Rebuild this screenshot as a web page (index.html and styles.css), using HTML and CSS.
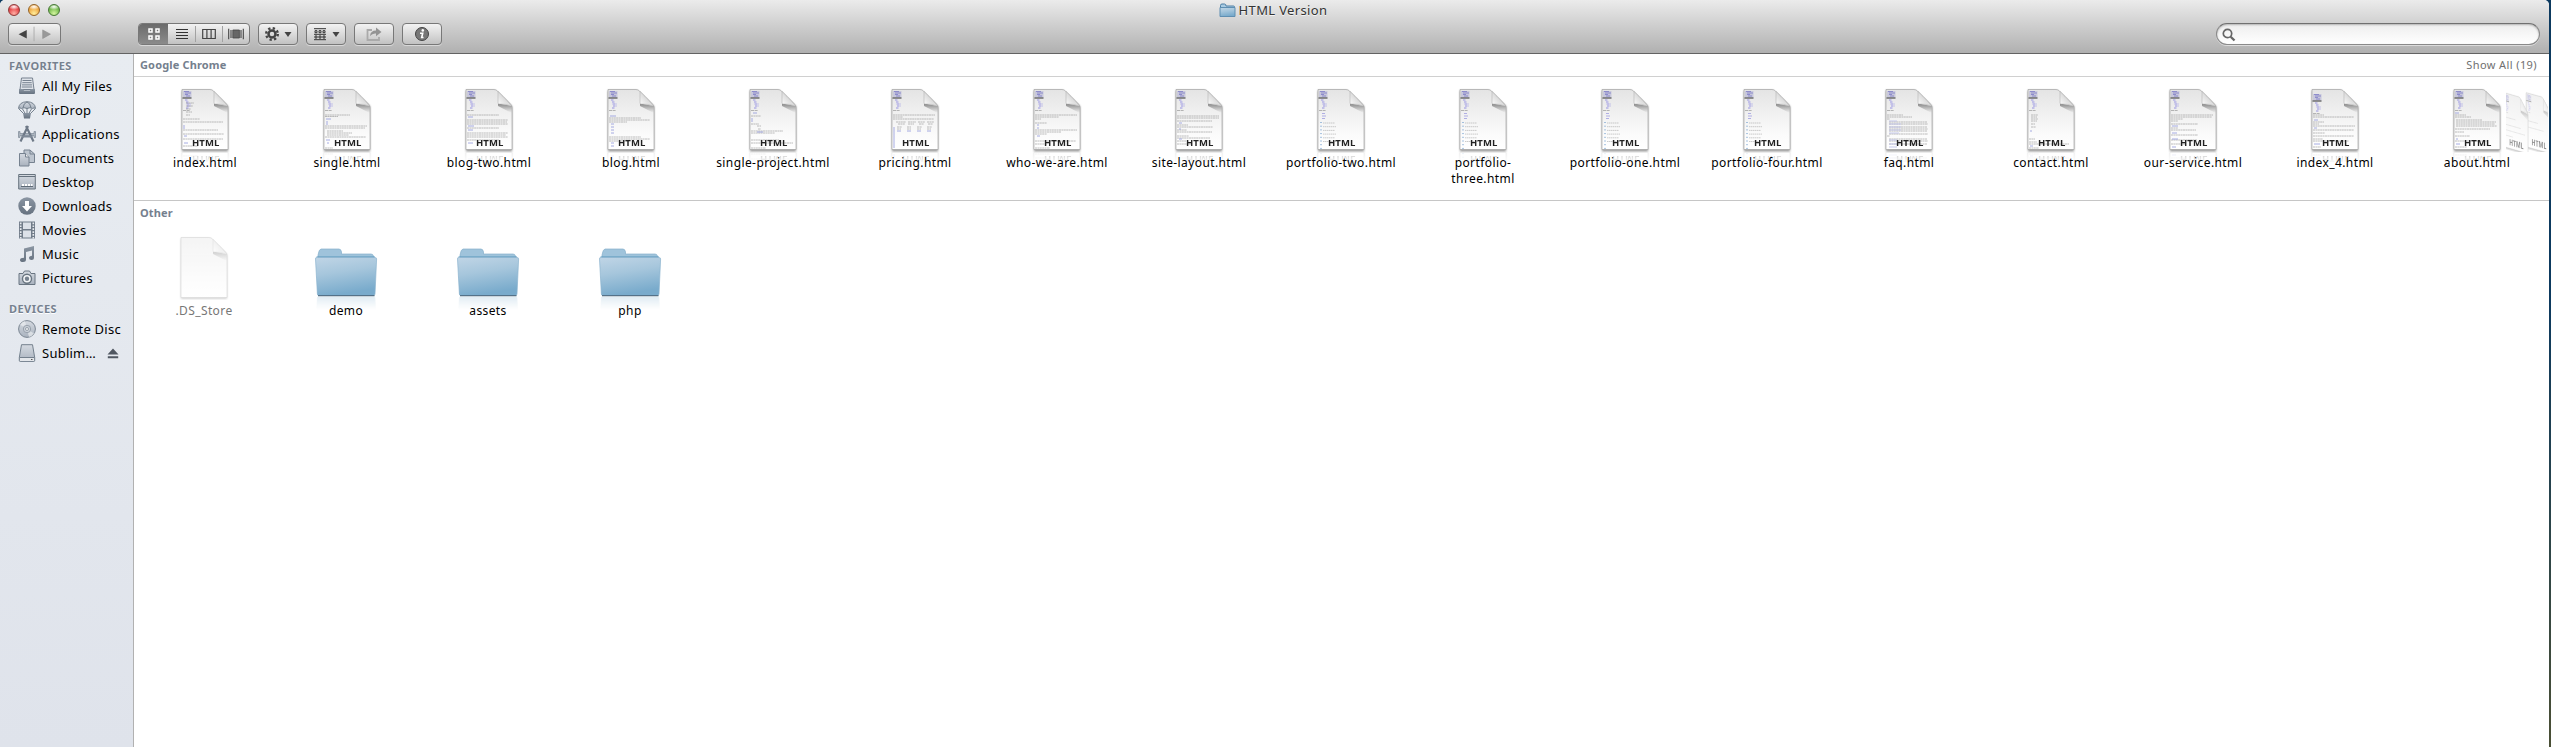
FILE: index.html
```html
<!DOCTYPE html>
<html lang="en">
<head>
<meta charset="utf-8">
<title>HTML Version</title>
<link rel="stylesheet" href="styles.css">
</head>
<body>
<svg class="defs" width="0" height="0" aria-hidden="true">
  <defs>
    <linearGradient id="paper" x1="0" y1="0" x2="0" y2="1"><stop offset="0" stop-color="#e4e4e4"/><stop offset=".75" stop-color="#fbfbfb"/><stop offset="1" stop-color="#fff"/></linearGradient>
    <linearGradient id="curl" x1="0" y1="1" x2=".6" y2="0.4"><stop offset="0" stop-color="#fff"/><stop offset="1" stop-color="#d4d4d4"/></linearGradient>
    <linearGradient id="curlShade" x1="0" y1="0" x2="0" y2="1"><stop offset="0" stop-color="#555" stop-opacity=".7"/><stop offset="1" stop-color="#777" stop-opacity="0"/></linearGradient>
    <linearGradient id="folderFront" x1="0" y1="0" x2=".25" y2="1"><stop offset="0" stop-color="#c0d5e6"/><stop offset=".45" stop-color="#a6c6dc"/><stop offset="1" stop-color="#79abcc"/></linearGradient>
    <linearGradient id="steel" x1="0" y1="0" x2="0" y2="1"><stop offset="0" stop-color="#8b96a3"/><stop offset="1" stop-color="#667280"/></linearGradient>
    <linearGradient id="steelLight" x1="0" y1="0" x2="0" y2="1"><stop offset="0" stop-color="#d5dae1"/><stop offset="1" stop-color="#a9b2be"/></linearGradient>
    <filter id="soft" x="-20%" y="-20%" width="140%" height="140%"><feGaussianBlur stdDeviation=".9"/></filter>
    <symbol id="page" viewBox="0 0 54 66">
      <path d="M4 4.500H33L50 20.500V64.700H4Z" fill="#000" opacity=".5" filter="url(#soft)"/>
      <path d="M4 3.500H32Q34 3.500 35.500 5L48.500 18Q50 19.500 50 21.500V63.500H4Z" fill="url(#paper)" stroke="#9a9a9a" stroke-width=".6"/>
      <path d="M36 17.500L49.700 20V27L36 20Z" fill="url(#curlShade)"/>
      <path d="M36 5.500V17Q36 18 37 18Q45 17.500 49.700 20.500Q47 16 36 5.500Z" fill="url(#curl)" stroke="#aaa" stroke-width=".5"/>
    </symbol>
    <symbol id="head" viewBox="0 0 54 66">
      <path d="M5 5h8.500v6.500h-8.500z" fill="#c8c8dc"/>
      <path d="M6 5.500h5M7 7h6M7 8.500h3M8 10h4" stroke="#8784c8" stroke-width=".9"/>
      <path d="M4.500 12h9" stroke="#333"/>
      <path d="M7 14h3M8 16h3M8.500 18h4M9 20h3.500M8 22h3" stroke="#b5b3e6" stroke-width="1.500" stroke-dasharray="2.500 .5"/>
      <path d="M5 24.500h7" stroke="#999" stroke-width=".7" stroke-dasharray="3 .6"/>
    </symbol>
    <symbol id="grid" viewBox="0 0 54 66"><path d="M8 27.500h3M8 30h4M8 32.500h3" stroke="#b0aee4"/><path d="M7 36v28" stroke="#5289c4" stroke-dasharray="1 2.700"/><path d="M9 37h12M9 40.700h13M9 44.400h12M9 48.100h13M9 51.800h12M9 55.500h13" stroke="#aaa" stroke-width=".6" stroke-dasharray="1.500 .5"/></symbol>
    <symbol id="folder" viewBox="0 0 66 50">
      <path d="M5 48V8Q6 2 8 2H26Q28 2 28.500 5V7H58Q60 7 60.500 9V48Z" fill="#9fc3db" stroke="#86b0cc" stroke-width=".7"/>
      <path d="M3.500 10H62" stroke="#5796bd" stroke-width="1"/>
      <path d="M2.500 12Q2 10.400 4.500 10.400H61Q64 10.400 63.600 12L62 47Q62 48.500 60 48.500H6Q4.500 48.500 4.400 47Z" fill="url(#folderFront)" stroke="#8bb3ce" stroke-width=".7"/>
      <path d="M5 48.600H61.500" stroke="#4f6c82"/>
    </symbol>
  </defs>
</svg>

<div class="window">
  <header class="chrome">
    <div class="titlebar">
      <div class="lights"><i class="red"></i><i class="amber"></i><i class="green"></i></div>
      <h1 class="title"><svg viewBox="0 0 17 15" width="17" height="15"><path d="M1.500 13.500V2.500Q1.500 1 3 1H5.500Q7 1 7 3H14.500Q15.500 3 15.500 4V13.500Z" fill="#a9cbe2" stroke="#4c7fa5"/><path d="M1 4.500H16V13.500H1Z" fill="url(#folderFront)" stroke="#5f8fb2"/></svg><span>HTML Version</span></h1>
    </div>
    <div class="toolbar">
      <div class="btn nav">
        <svg viewBox="0 0 53 22" width="51" height="20"><path d="M18 6.500V16L9 11.200Z" fill="#444"/><path d="M26 3V19" stroke="#aaa"/><path d="M35.500 6.500V16L44 11.200Z" fill="#999" stroke="#888" stroke-width=".6"/></svg>
      </div>
      <div class="btn views">
        <span class="on"><svg viewBox="0 0 14 12" width="14" height="12"><path d="M2 1h3v3H2zM9 1h3v3H9zM2 8h3v3H2zM9 8h3v3H9z" fill="none" stroke="#fff" stroke-width="1.500"/></svg></span>
        <span><svg viewBox="0 0 12 12" width="12" height="12"><path d="M0 1.500h12M0 4.500h12M0 7.500h12M0 10.500h12" stroke="#333" stroke-width="1.200"/></svg></span>
        <span><svg viewBox="0 0 14 12" width="14" height="12"><path d="M.7 1.500h12.600v9H.7zM4.900 1.500v9M9.100 1.500v9" fill="none" stroke="#444" stroke-width="1.200"/></svg></span>
        <span><svg viewBox="0 0 16 12" width="16" height="12"><path d="M.7.700v10.600M3 2v8M13 2v8M15.300.700v10.600" stroke="#444" stroke-width="1.100"/><path d="M4.800 2h6.600v8H4.800z" fill="#666" stroke="#444" stroke-width=".8"/></svg></span>
      </div>
      <div class="btn action">
        <svg viewBox="0 0 28 16" width="28" height="16"><circle cx="8" cy="8" r="5.800" fill="none" stroke="#444" stroke-width="2.400" stroke-dasharray="2.278 2.278"/><circle cx="8" cy="8" r="3.500" fill="none" stroke="#444" stroke-width="2.500"/><path d="M20.500 6h7L24 11Z" fill="#444"/></svg>
      </div>
      <div class="btn action">
        <svg viewBox="0 0 28 16" width="28" height="16"><path d="M2 2.700h12M2 8.300h12M2 13.700h12" stroke="#333"/><path d="M3 4.700h2v2H3zM7 4.700h2v2H7zM11 4.700h2v2h-2zM3 10h2v2H3zM7 10h2v2H7zM11 10h2v2h-2z" fill="none" stroke="#333"/><path d="M20.500 6h7L24 11Z" fill="#444"/></svg>
      </div>
      <div class="btn action">
        <svg viewBox="0 0 18 16" width="18" height="16"><path d="M7 4H2.500V14H14V11" fill="none" stroke="#aaa" stroke-width="1.800"/><path d="M5 10Q5.500 4.500 11 4.500V1.500L16.500 6L11 10.300V7.500Q7.500 7 5 10Z" fill="#949494"/></svg>
      </div>
      <div class="btn action">
        <svg viewBox="0 0 16 16" width="16" height="16"><circle cx="8" cy="8" r="6.500" fill="#777" stroke="#444"/><circle cx="8.800" cy="4.400" r="1.300" fill="#fff"/><path d="M6 7.300h2.700L7.700 11.500h1.800" fill="none" stroke="#fff" stroke-width="1.600"/></svg>
      </div>
      <div class="search"><svg viewBox="0 0 14 14" width="14" height="14"><circle cx="5.500" cy="5.500" r="4.200" fill="none" stroke="#666" stroke-width="1.700"/><path d="M8.700 8.700L12.500 12.500" stroke="#666" stroke-width="2.300"/></svg></div>
    </div>
  </header>

  <div class="body">
    <nav class="sidebar">
      <h2>FAVORITES</h2>
      <ul>
        <li><svg viewBox="0 0 18 18"><path d="M3.500 1h11L16 12.500H2Z" fill="#dfe3e9" stroke="#76818f"/><path d="M4.500 3.500h9M4.300 5.700h9.400M4 7.900h10M3.800 10h10.400" stroke="#76818f"/><path d="M1 12h4l1 1.500h6L13 12h4v4q0 1-1 1H2q-1 0-1-1Z" fill="url(#steel)"/></svg>All My Files</li>
        <li><svg viewBox="0 0 18 18"><path d="M.5 7.500Q1 1 9 .7Q17 1 17.500 7.500Q16 6.300 14.500 7.500Q12 6 9 7.500Q6 6 3.500 7.500Q2 6.300 .5 7.500Z" fill="url(#steelLight)" stroke="#75818e"/><path d="M5 7Q5.500 2 9 1Q12.500 2 13 7M1 8l5 5M4.500 8l3 5M9 7v6M13.500 8l-3 5M17 8l-5 5" fill="none" stroke="#75818e"/><path d="M5 12h8l-1 5.500H6Z" fill="url(#steel)"/></svg>AirDrop</li>
        <li><svg viewBox="0 0 18 18"><path d="M.5 6.500h1.500v2h14v-2h1.500v6h-1.500v-2H2v2H.5Z" fill="#aeb7c1" stroke="#7e8997" stroke-width=".7"/><path d="M8 1L15.500 16.500M10 1L2.500 16.500" stroke="#6e7987" stroke-width="2.200"/><path d="M3.500 11.500h11" stroke="#7e8997" stroke-width="2"/></svg>Applications</li>
        <li><svg viewBox="0 0 18 18"><path d="M6 1h6l4.500 4v8.500H6Z" fill="#bdc5cf" stroke="#768290"/><path d="M12 1v4h4.500" fill="none" stroke="#768290"/><path d="M1.500 4.500h6L11 8v9H1.500Z" fill="url(#steelLight)" stroke="#768290"/><path d="M7.500 4.500V8H11" fill="#eee" stroke="#768290"/></svg>Documents</li>
        <li><svg viewBox="0 0 18 18"><path d="M.7 1.500h16.600v14.500H.7Z" fill="url(#steelLight)" stroke="#68747f"/><path d="M1 3.500h16" stroke="#65717d"/><path d="M3 13.500h12" stroke="#5e6a76"/><path d="M4 12h2M7 12h2M10 12h2M13 12h1.500" stroke="#fff" stroke-width="2"/></svg>Desktop</li>
        <li><svg viewBox="0 0 18 18"><circle cx="9" cy="9" r="8.700" fill="url(#steel)"/><path d="M7 4h4v5h3L9 14.500L4 9h3Z" fill="#fff"/></svg>Downloads</li>
        <li><svg viewBox="0 0 18 18"><path d="M1 .5h16v17H1Z" fill="#717c89"/><path d="M5 1.500h8v6.500H5ZM5 9.500h8v7H5Z" fill="#dce1e8"/><path d="M2.700 1.500v16M15.300 1.500v16" stroke="#e8ebef" stroke-width="1.600" stroke-dasharray="1.700 1.200"/></svg>Movies</li>
        <li><svg viewBox="0 0 18 18"><path d="M6 3.500L16 1V12.500Q16 15 13.500 15Q11 15 11 13Q11 11 14 10.800V5.500L8 7V14.500Q8 17 5 17Q2 17 2 15Q2 12.800 6 12.800Z" fill="url(#steel)"/></svg>Music</li>
        <li><svg viewBox="0 0 18 18"><path d="M1 4.500h4L6.500 2h5L13 4.500h4v11H1Z" fill="url(#steelLight)" stroke="#697581" stroke-linejoin="round"/><circle cx="9" cy="9.700" r="4.500" fill="#f3f5f7" stroke="#697581" stroke-width="1.400"/><circle cx="9" cy="9.700" r="2.200" fill="#77828f"/></svg>Pictures</li>
      </ul>
      <h2>DEVICES</h2>
      <ul>
        <li><svg viewBox="0 0 18 18"><circle cx="9" cy="9" r="8.400" fill="url(#steelLight)" stroke="#7b8692"/><path d="M9 9L2 4.500Q4 1.500 7 1ZM9 9L16 13.500Q14 16.500 11 17Z" fill="#e9ecf0" opacity=".7"/><circle cx="9" cy="9" r="3.700" fill="#c9cfd7" stroke="#8b95a1" stroke-width=".8"/><circle cx="9" cy="9" r="1.500" fill="#f1f3f5" stroke="#7b8692" stroke-width=".7"/></svg>Remote Disc</li>
        <li><svg viewBox="0 0 18 18"><path d="M3.500.700h11l2.200 12.800V16.500q0 .9-.9.900H2.200q-.9 0-.9-.9V13.500Z" fill="url(#steelLight)" stroke="#74808d"/><path d="M1.500 13.500h15" stroke="#74808d"/><path d="M2 14h14v3H2Z" fill="#e4e7eb"/><path d="M13 15.500h1.500" stroke="#555"/></svg><span class="disk">Sublim…</span><svg class="eject" viewBox="0 0 12 11"><path d="M6 .5L11.500 6.500H.5ZM.8 8.200h10.400v2H.8Z" fill="#505761"/></svg></li>
      </ul>
    </nav>

    <main class="content">
      <section class="group first">
        <div class="group-head"><h2>Google Chrome</h2><span class="show">Show All (19)</span></div>
        <div class="files">
          <figure><svg class="doc"><use href="#page"/><use href="#head"/><path class="ln" d="M8 17h8M8 20h7M8 23h5M8 26h6M8 29h4M5 33h17M5 36h40M5 44h35M5 48h41M5 53h40M5 60h15"/><path class="bl" d="M6 39v4M6 50h3M6 57h4"/><text x="14" y="60">HTML</text></svg><figcaption>index.html</figcaption></figure>
          <figure><svg class="doc"><use href="#page"/><use href="#head"/><path class="ln" d="M5 29h25M5 30.500h13M5 40h42M5 42h40M7 45h16M7 47h25M7 49h22M5 51h41M5 62h8"/><path class="bl" d="M6 33h5M7 35v4M6 54h4M7 57h2"/><text x="14" y="60">HTML</text></svg><figcaption>single.html</figcaption></figure>
          <figure><svg class="doc"><use href="#page"/><use href="#head"/><path class="ln" d="M5 29h32M5 34h41M5 36h40M5 38h41M5 42h32M5 47h41M5 49h39M5 51h41M5 54h32"/><path class="bl" d="M6 31h5M6 40h6M6 44h5M6 57h5"/><text x="14" y="60">HTML</text></svg><figcaption>blog-two.html</figcaption></figure>
          <figure><svg class="doc"><use href="#page"/><use href="#head"/><path class="ln" d="M5 32h32M5 34h41M5 36h18M5 51h32M5 53h41M5 55h20"/><path class="bl" d="M6 30h6M7 38h3M7 41h3M7 44h3M7 47h3M7 57h3M7 60h3"/><text x="14" y="60">HTML</text></svg><figcaption>blog.html</figcaption></figure>
          <figure><svg class="doc"><use href="#page"/><use href="#head"/><path class="ln" d="M5 30h10M5 38h8M11 40h4M12 43h3M5 45h32M5 47h24M5 54h28M5 57h42M5 62h15"/><path class="bl" d="M7 27h4M6 32v4M11 46h6"/><text x="14" y="60">HTML</text></svg><figcaption>single-project.html</figcaption></figure>
          <figure><svg class="doc"><use href="#page"/><use href="#head"/><path class="ln" d="M5 29h42M5 31h10M5 33h41M8 36h10M20 36h8M30 36h7M39 36h7M10 38h7M20 38h6M31 38h5M40 38h5M9 41h5M19 41h4M29 41h5M39 41h5M9 43h4M19 43h4M29 43h4M39 43h4"/><path class="bl" d="M6 41v21M9 45h4M19 45h4M29 45h4M39 45h4"/><text x="14" y="60">HTML</text></svg><figcaption>pricing.html</figcaption></figure>
          <figure><svg class="doc"><use href="#page"/><use href="#head"/><path class="ln" d="M5 29h42M5 31h24M5 33h6M5 37h12M5 44h42M5 46h26M5 48h12M5 55h41M5 58h12M5 62h15"/><path class="bl" d="M7 39h2M7 42h2M7 50h3"/><text x="14" y="60">HTML</text></svg><figcaption>who-we-are.html</figcaption></figure>
          <figure><svg class="doc"><use href="#page"/><use href="#head"/><path class="ln" d="M5 30h42M5 32h42M5 35h35M5 39h11M5 41h36M5 44h10M5 46h35M5 50h12M5 52h33M5 55h9M5 58h15"/><path class="bl" d="M7 37h3M7 43h2M7 53h3"/><text x="14" y="60">HTML</text></svg><figcaption>site-layout.html</figcaption></figure>
          <figure><svg class="doc"><use href="#page"/><use href="#head"/><use href="#grid"/><text x="14" y="60">HTML</text></svg><figcaption>portfolio-two.html</figcaption></figure>
          <figure><svg class="doc"><use href="#page"/><use href="#head"/><use href="#grid"/><text x="14" y="60">HTML</text></svg><figcaption>portfolio-<br>three.html</figcaption></figure>
          <figure><svg class="doc"><use href="#page"/><use href="#head"/><use href="#grid"/><text x="14" y="60">HTML</text></svg><figcaption>portfolio-one.html</figcaption></figure>
          <figure><svg class="doc"><use href="#page"/><use href="#head"/><use href="#grid"/><text x="14" y="60">HTML</text></svg><figcaption>portfolio-four.html</figcaption></figure>
          <figure><svg class="doc"><use href="#page"/><use href="#head"/><path class="ln" d="M5 29h16M5 31h25M5 33h3M7 36h38M7 38h39M7 41h38M7 43h39M7 45h38M7 48h39M5 50h3M7 53h38M7 55h39M7 58h38"/><path class="bl pale" d="M7 35h8M7 38h12M7 41h12M7 44h12M7 47h10M7 54h8M7 58h8M7 61h8"/><text x="14" y="60">HTML</text></svg><figcaption>faq.html</figcaption></figure>
          <figure><svg class="doc"><use href="#page"/><use href="#head"/><path class="ln" d="M7 29h7M7 31h6M7 33h7M7 35h6M7 38h4M7 41h5M5 53h6M5 56h8M5 58h40M5 62h10"/><path class="bl" d="M6 45h2M6 60h3"/><text x="14" y="60">HTML</text></svg><figcaption>contact.html</figcaption></figure>
          <figure><svg class="doc"><use href="#page"/><use href="#head"/><path class="ln" d="M5 29h42M5 31h41M5 33h12M5 35h7M5 38h27M5 42h7M5 44h25M5 49h27M5 54h26M5 58h15"/><path class="bl" d="M6 40h6M6 47h5M6 53h6M6 61h4"/><text x="14" y="60">HTML</text></svg><figcaption>our-service.html</figcaption></figure>
          <figure><svg class="doc"><use href="#page"/><use href="#head" y="3"/><path class="ln" d="M5 29h11M5 31h41M5 36h11M5 38h6M5 40h42M5 44h41M5 47h12M5 50h41M5 53h10M5 55h36M5 61h8"/><path class="bl" d="M6 34h4M6 42h3M6 58h6"/><text x="14" y="60">HTML</text></svg><figcaption>index_4.html</figcaption></figure>
          <figure><svg class="doc"><use href="#page"/><use href="#head"/><path class="ln" d="M5 29h11M5 31h16M6 34h26M6 36h40M6 38h39M6 40h41M5 43h35M5 46h9M5 50h15M5 55h32M5 61h12"/><path class="bl" d="M5 27h4M6 53h2M6 58h4"/><text x="14" y="60">HTML</text></svg><figcaption>about.html</figcaption></figure>
          <div class="stack">
            <svg class="ghost" viewBox="0 0 42 66" width="42" height="66">
              <g transform="translate(18 0) matrix(.54 .15 0 .9 0 3)"><use href="#page" width="54" height="66"/><use href="#head" width="54" height="66"/><path class="ln" d="M6 34h20M6 41h30"/><text x="14" y="60">HTML</text></g>
              <g transform="translate(-4 0) matrix(.52 .15 0 .9 0 3)"><use href="#page" width="54" height="66"/><use href="#head" width="54" height="66"/><path class="ln" d="M6 30h20M6 38h30M6 44h38M6 50h15"/><text x="14" y="60">HTML</text></g>
            </svg>
          </div>
        </div>
      </section>
      <section class="group other">
        <div class="group-head"><h2>Other</h2></div>
        <div class="files">
          <figure class="hidden-file"><svg class="doc"><use href="#page"/></svg><figcaption>.DS_Store</figcaption></figure>
          <figure><svg class="dir"><use href="#folder"/></svg><figcaption>demo</figcaption></figure>
          <figure><svg class="dir"><use href="#folder"/></svg><figcaption>assets</figcaption></figure>
          <figure><svg class="dir"><use href="#folder"/></svg><figcaption>php</figcaption></figure>
        </div>
      </section>
    </main>
  </div>
</div>
</body>
</html>
```
FILE: styles.css
```css
* { box-sizing: border-box; }
body {
  margin: 0;
  background: linear-gradient(#0d3a5f 40%, #4a4f35);
  font-family: "Noto Sans", "Open Sans", sans-serif;
  overflow: hidden;
}
h1, h2, ul, figure { margin: 0; padding: 0; font-weight: normal; }
svg { display: block; }
.defs { position: absolute; }

.window {
  display: flex;
  flex-direction: column;
  width: 2549px;
  height: 747px;
  background: #fff;
  border-radius: 5px 5px 0 0;
  overflow: hidden;
}
.chrome {
  flex: none;
  height: 54px;
  border-bottom: 1px solid #636363;
  background: linear-gradient(#ebebeb, #d0d0d0 45%, #b0b0b0);
}
.titlebar {
  display: grid;
  grid-template-columns: 1fr auto 1fr;
  align-items: center;
  height: 20px;
  padding: 0 11px 0 8px;
}
.lights { display: flex; gap: 8px; }
.lights i { width: 12px; height: 12px; border-radius: 50%; border: 1px solid #8d3b39; }
.red { background: radial-gradient(ellipse 60% 30% at 50% 18%, #fff, transparent), radial-gradient(circle at 50% 85%, #ffb0a5, #e2383d 65%); }
.lights .amber { border-color: #936226; background: radial-gradient(ellipse 60% 30% at 50% 18%, #fff, transparent), radial-gradient(circle at 50% 85%, #ffee9b, #eda13a 65%); }
.lights .green { border-color: #477636; background: radial-gradient(ellipse 60% 30% at 50% 18%, #fff, transparent), radial-gradient(circle at 50% 85%, #d5f5a0, #6bb545 65%); }
.title { display: flex; align-items: center; gap: 3px; font-size: 13px; line-height: 20px; letter-spacing: .35px; color: #333; text-shadow: 0 1px 0 #f4f4f4; }

.toolbar { display: flex; gap: 8px; padding: 3px 9px 0 8px; }
.btn {
  display: flex;
  align-items: center;
  justify-content: center;
  height: 22px;
  border: 1px solid #787878;
  border-radius: 4px;
  background: linear-gradient(#f3f3f3, #c2c2c2);
  box-shadow: 0 1px 0 rgba(255, 255, 255, .45);
}
.nav { width: 53px; margin-right: 69px; }
.action { width: 40px; }
.views { width: 112px; justify-content: flex-start; overflow: hidden; }
.views span { display: flex; align-items: center; justify-content: center; width: 27px; height: 20px; }
.views span.on { width: 29px; background: linear-gradient(#6b6b6b, #8b8b8b); }
.views span + span + span { border-left: 1px solid #a2a2a2; height: 16px; }
.search {
  width: 324px;
  height: 22px;
  margin-left: auto;
  padding: 4px 5px;
  border: 1px solid #8a8a8a;
  border-top-color: #707070;
  border-radius: 11px;
  background: linear-gradient(#eee, #fff);
  box-shadow: inset 0 1px 2px rgba(0, 0, 0, .25), 0 1px 0 rgba(255, 255, 255, .5);
}

.body { display: flex; flex: 1; min-height: 0; }
.sidebar {
  flex: none;
  width: 134px;
  padding-top: 3px;
  border-right: 1px solid #b1b1b1;
  background: linear-gradient(#e8ecf1, #dfe3eb);
}
.sidebar h2 { padding-left: 9px; font-size: 11px; font-weight: bold; line-height: 17px; letter-spacing: .45px; color: #76818f; text-shadow: 0 1px 0 #fff; }
.sidebar ul { list-style: none; }
.sidebar ul + h2 { margin-top: 10px; }
.sidebar li { display: flex; align-items: center; gap: 6px; height: 24px; padding-left: 18px; font-size: 13px; letter-spacing: .25px; white-space: nowrap; color: #000; }
.sidebar li svg { flex: none; width: 18px; height: 18px; }
.disk { width: 60px; }
.sidebar li svg.eject { width: 12px; height: 11px; margin-left: -1px; }

.content { flex: 1; min-width: 0; }
.group.first { height: 147px; border-bottom: 1px solid #c6c6c6; }
.group-head { display: flex; justify-content: space-between; align-items: center; height: 23px; padding: 0 12px 1px 6px; font-size: 11px; color: #707070; }
.first .group-head { border-bottom: 1px solid #d0d0d0; }
.group-head h2 { font-size: 11px; font-weight: bold; letter-spacing: .15px; color: #75808e; }
.show { letter-spacing: .4px; }
.files { display: flex; height: 123px; padding-top: 9px; overflow: hidden; }
.files figure { display: flex; flex: none; flex-direction: column; align-items: center; width: 142px; }
.doc { flex: none; width: 54px; height: 66px; }
.doc text, .ghost text { font: bold 9.5px "Open Sans", "Noto Sans", sans-serif; letter-spacing: .1px; fill: #222; }
.ln { fill: none; stroke: #8a8a8a; stroke-width: .55; stroke-dasharray: 2 .4; }
.bl { fill: none; stroke: #8f98dc; stroke-width: .8; }
.pale { stroke: #b9bce8; }
figcaption { padding-top: 3px; font-size: 12px; line-height: 16px; letter-spacing: .4px; text-align: center; white-space: nowrap; color: #000; position: relative; }
.first figure .doc { -webkit-box-reflect: below -2px linear-gradient(transparent 80%, rgba(0, 0, 0, .3)); }
.stack { flex: none; width: 42px; margin-left: -42px; }
.ghost { opacity: .5; }
.other .files { padding-top: 10px; }
.other figure { position: relative; left: -1px; }
.hidden-file .doc { opacity: .4; }
.hidden-file figcaption { color: #777; }
.dir { flex: none; width: 66px; height: 50px; margin-top: 13px; margin-bottom: 3px; -webkit-box-reflect: below -2px linear-gradient(transparent 70%, rgba(0, 0, 0, .25)); }
```
